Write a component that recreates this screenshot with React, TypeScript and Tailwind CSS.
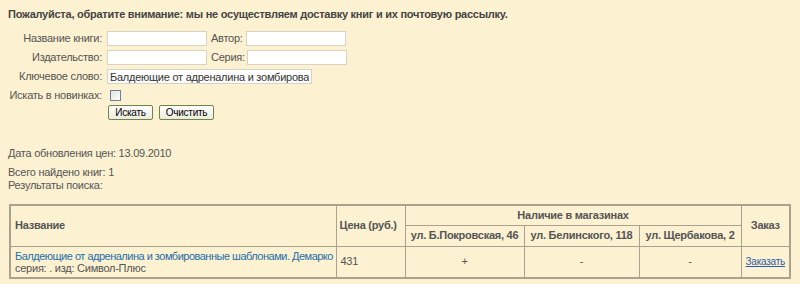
const App = () => {
  return (
    <div className="w-[800px] h-[284px] bg-[#fcf1d1] text-[11px] leading-[13px] tracking-[-0.25px] text-[#555] font-['Liberation_Sans',Arial,sans-serif] overflow-hidden">
      <div className="pt-[8px] pl-[8px] font-bold text-[#444]">
        Пожалуйста, обратите внимание: мы не осуществляем доставку книг и их почтовую рассылку.
      </div>

      <div className="pt-[8px] pl-[8px] flex flex-col">
        <div className="flex items-center h-[19px]">
          <div className="w-[95px] text-right pr-[1px] whitespace-nowrap">Название книги:</div>
          <input className="ml-[4px] w-[100px] h-[15px] bg-white border border-[#d6d2c4] outline-none" />
          <div className="w-[39px] pl-[4px]">Автор:</div>
          <input className="w-[100px] h-[15px] bg-white border border-[#d6d2c4] outline-none" />
        </div>
        <div className="flex items-center h-[19px]">
          <div className="w-[95px] text-right pr-[1px] whitespace-nowrap">Издательство:</div>
          <input className="ml-[4px] w-[100px] h-[15px] bg-white border border-[#d6d2c4] outline-none" />
          <div className="w-[40px] pl-[4px]">Серия:</div>
          <input className="w-[100px] h-[15px] bg-white border border-[#d6d2c4] outline-none" />
        </div>
        <div className="flex items-center h-[19px]">
          <div className="w-[95px] text-right pr-[1px] whitespace-nowrap">Ключевое слово:</div>
          <input
            className="ml-[4px] w-[205px] h-[15px] px-[2px] bg-white border border-[#d6d2c4] outline-none text-[11px] tracking-[-0.25px] text-[#333]"
            defaultValue="Балдеющие от адреналина и зомбированн"
          />
        </div>
        <div className="flex items-center h-[19px]">
          <div className="w-[95px] text-right pr-[1px] whitespace-nowrap">Искать в новинках:</div>
          <div className="ml-[7px] w-[11px] h-[11px] border border-[#6d7f9c] bg-gradient-to-br from-[#e4e4dc] to-white" />
        </div>
        <div className="flex items-center gap-[6px] pl-[100px]">
          <button className="w-[45px] h-[15px] rounded-[2px] border border-[#6f8543] bg-gradient-to-b from-white to-[#ecebdf] text-[10px] leading-[13px] text-black">
            Искать
          </button>
          <button className="w-[55px] h-[15px] rounded-[2px] border border-[#6f8543] bg-gradient-to-b from-white to-[#ecebdf] text-[10px] leading-[13px] text-black">
            Очистить
          </button>
        </div>
      </div>

      <div className="pl-[8px] pt-[27px]">Дата обновления цен: 13.09.2010</div>
      <div className="pl-[8px] pt-[6px]">Всего найдено книг: 1</div>
      <div className="pl-[8px]">Результаты поиска:</div>

      <table className="ml-[9px] mt-[12px] w-[780px] table-fixed border-collapse border-2 border-[#aaa28d]">
        <colgroup>
          <col className="w-[326px]" />
          <col className="w-[69px]" />
          <col className="w-[119px]" />
          <col className="w-[115px]" />
          <col className="w-[102px]" />
          <col className="w-[49px]" />
        </colgroup>
        <thead>
          <tr className="h-[20px]">
            <th rowSpan={2} className="border border-[#aaa28d] text-left pl-[4px] font-bold">Название</th>
            <th rowSpan={2} className="border border-[#aaa28d] text-left pl-[3px] font-bold whitespace-nowrap">Цена (руб.)</th>
            <th colSpan={3} className="border border-[#aaa28d] text-center font-bold">Наличие в магазинах</th>
            <th rowSpan={2} className="border border-[#aaa28d] text-center font-bold">Заказ</th>
          </tr>
          <tr className="h-[21px]">
            <th className="border border-[#aaa28d] text-center font-bold whitespace-nowrap">ул. Б.Покровская, 46</th>
            <th className="border border-[#aaa28d] text-center font-bold whitespace-nowrap">ул. Белинского, 118</th>
            <th className="border border-[#aaa28d] text-center font-bold whitespace-nowrap">ул. Щербакова, 2</th>
          </tr>
        </thead>
        <tbody>
          <tr className="h-[32px]">
            <td className="border border-[#aaa28d] pl-[4px] leading-[12px]">
              <a className="text-[#1f6fa8] whitespace-nowrap tracking-[-0.5px]">Балдеющие от адреналина и зомбированные шаблонами. Демарко</a>
              <br />
              серия: . изд: Символ-Плюс
            </td>
            <td className="border border-[#aaa28d] pl-[4px]">431</td>
            <td className="border border-[#aaa28d] text-center">+</td>
            <td className="border border-[#aaa28d] text-center">-</td>
            <td className="border border-[#aaa28d] text-center">-</td>
            <td className="border border-[#aaa28d] text-center">
              <a className="text-[#2a5da8] underline text-[10px]">Заказать</a>
            </td>
          </tr>
        </tbody>
      </table>
    </div>
  );
};

export default App;
